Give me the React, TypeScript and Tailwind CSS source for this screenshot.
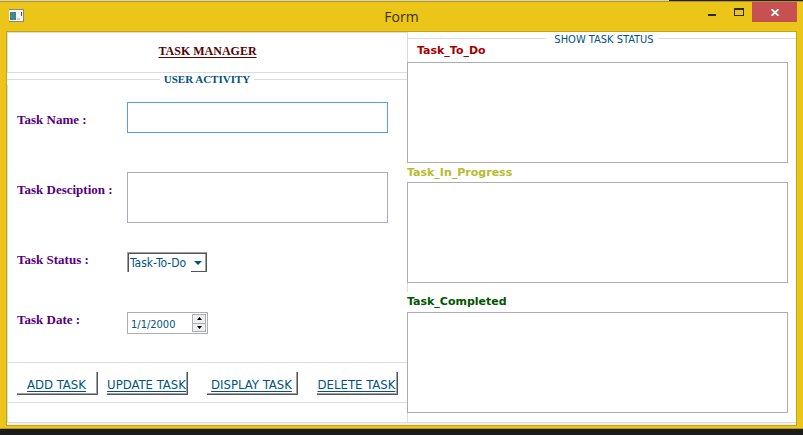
import { useState } from "react";
import type { ReactNode } from "react";

const sans = "font-['DejaVu_Sans_Condensed','DejaVu_Sans',sans-serif]";
const wide = "font-['DejaVu_Sans',sans-serif]";
const serif = "font-['Liberation_Serif',serif]";

function TitleBar() {
  return (
    <header className="grid h-[29px] grid-cols-[1fr_auto_1fr] items-start">
      <svg className="mt-[7px] ml-[9px]" width="15" height="13" viewBox="0 0 15 13" aria-hidden="true">
        <rect width="15" height="13" fill="#8b8878" />
        <rect x="0" y="1" width="14" height="11" fill="#f7f7f7" />
        <rect x="1" y="3" width="6" height="8" fill="#4c78a8" />
        <rect x="2" y="4" width="4" height="6" fill="#3f9470" />
        <rect x="12" y="3" width="1" height="4" fill="#405060" />
        <rect x="8" y="9" width="3" height="2" fill="#d4d4d4" />
      </svg>
      <h1 className="pt-[3px] font-['Open_Sans'] text-[14px] leading-6 text-[#3a3210]">Form</h1>
      <div className="flex justify-end">
        <button aria-label="Minimize" className="flex h-5 w-[27px] justify-center pt-3">
          <span className="h-0.5 w-2 bg-[#2b2b2b]" />
        </button>
        <button aria-label="Maximize" className="flex h-5 w-[27px] justify-center pt-1.5">
          <span className="h-2 w-2.5 border border-t-2 border-[#2b2b2b]" />
        </button>
        <button aria-label="Close" className="mr-1.5 flex h-5 w-[45px] items-center justify-center bg-[#c75050]">
          <svg width="8" height="7" viewBox="0 0 8 7" stroke="#fff" strokeWidth="1.8" aria-hidden="true">
            <path d="M0.5 0.2 7.5 6.8M7.5 0.2 0.5 6.8" />
          </svg>
        </button>
      </div>
    </header>
  );
}

function Field({ id, label, tall, children }: { id: string; label: string; tall?: boolean; children: ReactNode }) {
  return (
    <div className="flex items-start">
      <label
        htmlFor={id}
        className={`w-[110px] shrink-0 whitespace-nowrap text-[13px] leading-4 font-bold text-[#55007f] ${serif} ${tall ? "pt-2.5" : ""}`}
      >
        {label}
      </label>
      {children}
    </div>
  );
}

function ActionButton({ width, children }: { width: string; children: ReactNode }) {
  return (
    <button className={`h-[23px] border-r border-b border-[#555] ${width}`}>
      <span className="flex h-[22px] items-center justify-center overflow-hidden border-r border-b border-[#a0a0a0] pt-1 text-[13px] whitespace-nowrap text-[#00557f] underline underline-offset-2">
        {children}
      </span>
    </button>
  );
}

function TaskForm() {
  const [date, setDate] = useState("1/1/2000");
  return (
    <div className="flex w-[400px] shrink-0 flex-col">
      <div className="h-[41px] border border-r-0 border-[#dcdcdc] pt-2.5 text-center">
        <h2 className={`text-[12px] leading-4 font-bold text-[#550000] underline underline-offset-2 ${serif}`}>TASK MANAGER</h2>
      </div>
      <section className="flex flex-1 flex-col">
        <h3 className={`flex h-3 items-center gap-1 text-[11px] leading-3 font-bold text-[#00557f] ${serif}`}>
          <span className="h-px flex-1 bg-[#dcdcdc]" />
          USER ACTIVITY
          <span className="h-px flex-1 bg-[#dcdcdc]" />
        </h3>
        <div className="flex flex-1 flex-col border-l border-[#dcdcdc]">
          <form className="flex flex-col pt-[17px] pr-[19px] pb-7 pl-[9px]">
            <Field id="name" label="Task Name :" tall>
              <input id="name" className="h-[31px] min-w-0 flex-1 border border-[#569de5] px-1 text-[11px] outline-none" />
            </Field>
            <div className="h-[39px]" />
            <Field id="description" label="Task Desciption :" tall>
              <textarea id="description" className="block h-[51px] min-w-0 flex-1 resize-none border border-[#abadb3] px-1 text-[11px]" />
            </Field>
            <div className="h-[29px]" />
            <Field id="status" label="Task Status :">
              <div className="relative h-5 w-20 border-t border-l border-[#a0a0a0]">
                <select
                  id="status"
                  className="block h-[19px] w-[79px] appearance-none border-t border-l border-[#555] pl-px text-[12px] text-[#00557f]"
                >
                  <option>Task-To-Do</option>
                  <option>Task-In-Progress</option>
                  <option>Task-Completed</option>
                </select>
                <span className="pointer-events-none absolute top-px right-0 flex h-[18px] w-4 border-r border-b border-[#555]">
                  <span className="flex h-full w-full items-center justify-center border-r border-[#a0a0a0]">
                    <svg width="8" height="4" viewBox="0 0 8 4" aria-hidden="true">
                      <path d="M0 0h8L4 4z" fill="#00557f" />
                    </svg>
                  </span>
                </span>
              </div>
            </Field>
            <div className="h-10" />
            <Field id="date" label="Task Date :">
              <div className="flex h-[22px] w-[81px] border border-[#abadb3] p-px">
                <input
                  id="date"
                  value={date}
                  onChange={(e) => setDate(e.target.value)}
                  className="min-w-0 flex-1 pt-1 pl-0.5 text-[11px] text-[#00557f] outline-none"
                />
                <div className="flex w-3.5 flex-col">
                  <button type="button" aria-label="Increase" className="flex flex-1 items-center justify-center border border-[#abadb3] bg-[#efefef]">
                    <svg width="5" height="3" viewBox="0 0 5 3" aria-hidden="true">
                      <path d="M0 3h5L2.5 0z" />
                    </svg>
                  </button>
                  <button type="button" aria-label="Decrease" className="flex flex-1 items-center justify-center border border-t-0 border-[#abadb3] bg-[#efefef]">
                    <svg width="5" height="3" viewBox="0 0 5 3" aria-hidden="true">
                      <path d="M0 0h5L2.5 3z" />
                    </svg>
                  </button>
                </div>
              </div>
            </Field>
          </form>
          <div className="flex h-[41px] border-y border-[#dcdcdc] pt-[9px] pl-[9px]">
            <ActionButton width="w-[81px]">ADD TASK</ActionButton>
            <span className="w-[9px]" />
            <ActionButton width="w-[81px]">UPDATE TASK</ActionButton>
            <span className="w-[19px]" />
            <ActionButton width="w-[91px]">DISPLAY TASK</ActionButton>
            <span className="w-[19px]" />
            <ActionButton width="w-[81px]">DELETE TASK</ActionButton>
          </div>
        </div>
      </section>
    </div>
  );
}

const box = "block h-[101px] w-full resize-none border border-[#abadb3] px-1 text-[11px]";

function TaskStatus() {
  return (
    <section className="min-w-0 flex-1">
      <div className="border-l border-[#dcdcdc]">
        <h3 className="flex h-[13px] items-center text-[11px] leading-[13px] text-[#00557f]">
          <span className="h-px flex-1 bg-[#dcdcdc]" />
          <span className="pt-0.5 pr-1 pl-2">SHOW TASK STATUS</span>
          <span className="h-px flex-1 bg-[#dcdcdc]" />
        </h3>
        <label htmlFor="todo" className={`block h-[17px] pl-[9px] text-[11px] leading-3 font-bold text-[#aa0000] ${wide}`}>
          Task_To_Do
        </label>
      </div>
      <div className="pr-2">
        <textarea id="todo" className={box} />
        <label htmlFor="progress" className={`block h-[19px] text-[11px] leading-[19px] font-bold text-[#b9ba2d] ${wide}`}>
          Task_In_Progress
        </label>
        <textarea id="progress" className={box} />
        <div className="h-[9px] border-l border-[#dcdcdc]" />
        <label htmlFor="completed" className={`block h-5 text-[11px] leading-5 font-bold text-[#005500] ${wide}`}>
          Task_Completed
        </label>
        <textarea id="completed" className={box} />
        <div className="h-[9px] border-l border-[#dcdcdc]" />
      </div>
    </section>
  );
}

export default function App() {
  return (
    <div className={`min-h-screen bg-[#1c1c1c] ${sans}`}>
      <div className="flex h-px">
        <span className="w-5/6 bg-[#d9d5c5]" />
      </div>
      <main className="border-y border-[#b8971a] bg-[#ecc519]">
        <TitleBar />
        <div className="mx-1.5 mb-0.5 border border-[#c4a315] bg-[#f0f0f0] pb-0.5">
          <div className="flex border-b border-[#dcdcdc] bg-white">
            <TaskForm />
            <TaskStatus />
          </div>
        </div>
      </main>
    </div>
  );
}
